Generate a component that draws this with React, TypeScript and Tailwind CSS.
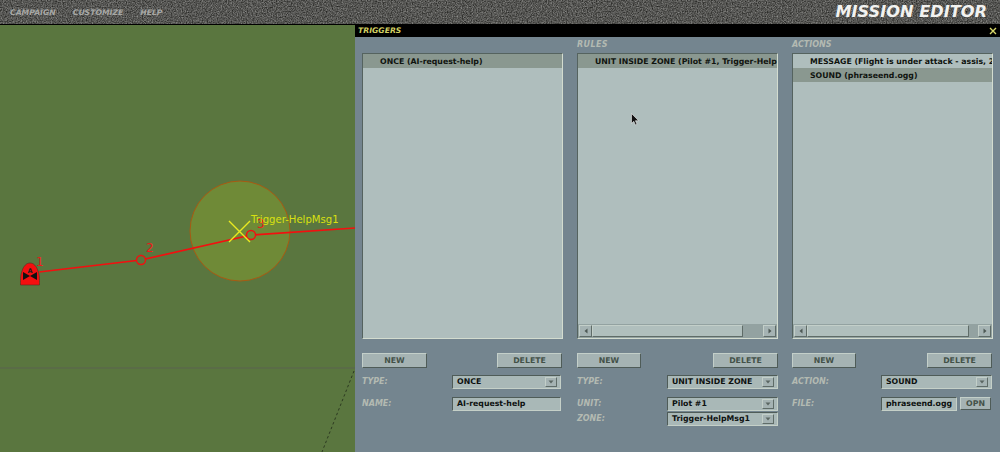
import type { ReactNode } from "react";

const dejavu = "font-['DejaVu_Sans',sans-serif]";
const labelClass = `${dejavu} text-[8px] font-bold italic leading-3 text-[#b3bab2]`;
const fieldClass = `${dejavu} flex items-center whitespace-nowrap bg-[#a9b8b7] pl-1 text-[7.8px] font-bold leading-none text-[#0d1110] border border-t-[#4f5c58] border-l-[#4f5c58] border-r-[#c5d0c8] border-b-[#c5d0c8]`;

const Button = ({ label, className }: { label: string; className: string }) => (
  <button className={`${dejavu} flex items-center justify-center bg-[#a5b3b3] text-[7.8px] font-bold leading-none text-[#435148] border border-t-[#c3cfc9] border-l-[#c3cfc9] border-r-[#4f5c58] border-b-[#4f5c58] ${className}`}>
    {label}
  </button>
);

const Select = ({ value, className }: { value: string; className: string }) => (
  <div className={`${fieldClass} justify-between pr-[3px] ${className}`}>
    <span>{value}</span>
    <span className="flex h-[10px] w-3 items-center justify-center border border-t-[#c3cfc9] border-l-[#c3cfc9] border-r-[#5f6c68] border-b-[#5f6c68] bg-[#a5b3b3]">
      <svg width="6" height="4" viewBox="0 0 6 4">
        <path d="M0.5 0.5h5L3 3.5z" fill="#5a6662" />
      </svg>
    </span>
  </div>
);

const Row = ({ label, children, className }: { label: string; children: ReactNode; className: string }) => (
  <div className={`flex items-center justify-between ${className}`}>
    <span className={labelClass}>{label}</span>
    {children}
  </div>
);

const Scrollbar = ({ thumb }: { thumb: string }) => (
  <div className="mt-auto flex h-[14px] shrink-0 items-center bg-[#93a2a1] px-px">
    <span className="flex h-3 w-[13px] items-center justify-center border border-[#c3cfc9] border-r-[#5f6c68] border-b-[#5f6c68] bg-[#a5b3b3]">
      <svg width="4" height="6" viewBox="0 0 4 6">
        <path d="M3.5 0.5v5L0.5 3z" fill="#4d5955" />
      </svg>
    </span>
    <span className={`h-3 border border-[#c3cfc9] border-r-[#5f6c68] border-b-[#5f6c68] bg-[#b0bfbd] ${thumb}`} />
    <span className="ml-auto flex h-3 w-[13px] items-center justify-center border border-[#c3cfc9] border-r-[#5f6c68] border-b-[#5f6c68] bg-[#a5b3b3]">
      <svg width="4" height="6" viewBox="0 0 4 6">
        <path d="M0.5 0.5v5L3.5 3z" fill="#4d5955" />
      </svg>
    </span>
  </div>
);

const ListBox = ({ items, selected, thumb }: { items: string[]; selected: number; thumb?: string }) => (
  <div className="flex h-[286px] flex-col overflow-hidden border border-t-[#55635f] border-l-[#55635f] border-r-[#d3dccf] border-b-[#d3dccf] bg-[#afbebd]">
    {items.map((item, i) => (
      <div
        key={item}
        className={`${dejavu} flex h-[14px] shrink-0 items-center whitespace-nowrap pl-[17px] pt-px text-[7.8px] font-bold leading-none text-[#10140f] ${i === selected ? "bg-[#8a9890]" : ""}`}
      >
        {item}
      </div>
    ))}
    {thumb && <Scrollbar thumb={thumb} />}
  </div>
);

const Cursor = () => (
  <svg className="absolute left-[631px] top-[113px]" width="9" height="13" viewBox="0 0 9 13">
    <path d="M0.5 0.5v10l2.3-2.2 1.6 3.6 1.6-.7-1.6-3.5h3.2z" fill="#111" stroke="#eee" strokeWidth="0.6" />
  </svg>
);

const MapView = () => (
  <div className="relative flex-1 overflow-hidden bg-[#5a763f]">
    <svg className="absolute inset-0" width="355" height="427" viewBox="0 25 355 427">
      <line x1="0" y1="368" x2="355" y2="368" stroke="#5a6350" strokeWidth="1.2" />
      <line x1="354" y1="371" x2="322" y2="452" stroke="#1f2a18" strokeWidth="0.8" strokeDasharray="2.5 2.5" />
      <circle cx="240" cy="231" r="50" fill="#6f8a37" stroke="#a85a12" strokeWidth="1" />
      <polyline points="39,272 141,260 251,235 355,228" fill="none" stroke="#f40f0f" strokeWidth="1.7" />
      <circle cx="141" cy="260" r="4.5" fill="#5a763f" stroke="#f40f0f" strokeWidth="1.4" />
      <circle cx="251" cy="235" r="4.5" fill="#6f8a37" stroke="#f40f0f" strokeWidth="1.4" />
      <path d="M229 221 L250 242 M250 221 L229 242" stroke="#eaea20" strokeWidth="1.4" />
      <path d="M20.5 285 C20.5 278 20.5 275 22 271 C23.5 266 26.5 263 30 263 C33.5 263 36.5 266 38 271 C39.5 275 39.5 278 39.5 285 Z" fill="#f40f0f" stroke="#5a2a20" strokeWidth="0.6" />
      <path d="M23 272 L30 276 L37 272 V280 L30 276 L23 280 Z" fill="#111" />
      <text x="30" y="273" textAnchor="middle" fontSize="6.5" fontWeight="bold" fill="#222" fontFamily="DejaVu Sans">A</text>
      <g fontFamily="DejaVu Sans" fontSize="12" fill="#f01818">
        <text x="36" y="266">1</text>
        <text x="146" y="252">2</text>
        <text x="257" y="228">3</text>
      </g>
      <text x="251" y="223" fontFamily="DejaVu Sans" fontSize="10.1" fill="#d9e010">Trigger-HelpMsg1</text>
    </svg>
  </div>
);

export default function App() {
  return (
    <div className="relative flex h-[452px] w-[1000px] flex-col overflow-hidden bg-black">
      <header className="relative flex h-6 shrink-0 items-center justify-between overflow-hidden bg-[#595957] pl-[10px] pr-[13px]">
        <svg className="absolute inset-0" width="1000" height="24">
          <filter id="grain" colorInterpolationFilters="sRGB" x="0" y="0" width="100%" height="100%">
            <feTurbulence type="fractalNoise" baseFrequency="0.8" numOctaves="2" seed="4" />
            <feColorMatrix values="0.55 0 0 0 0.06  0.55 0 0 0 0.06  0.55 0 0 0 0.05  0 0 0 0 1" />
          </filter>
          <rect width="1000" height="24" filter="url(#grain)" />
        </svg>
        <nav className={`${dejavu} relative flex gap-[17px] pt-px text-[7.7px] font-bold italic text-[#a7a8a5]`}>
          <span>CAMPAIGN</span>
          <span>CUSTOMIZE</span>
          <span>HELP</span>
        </nav>
        <h1 className={`${dejavu} relative text-[16.2px] font-bold italic leading-none text-[#f2f2f0]`}>MISSION EDITOR</h1>
      </header>

      <div className="flex flex-1 pt-px">
        <MapView />

        <section className="flex w-[645px] flex-col bg-[#74858f]">
          <div className="flex h-3 items-center justify-between bg-black pl-[3px] pr-[3px]">
            <span className={`${dejavu} text-[7.7px] font-bold italic leading-none text-[#d2cf62]`}>TRIGGERS</span>
            <svg width="8" height="8" viewBox="0 0 8 8">
              <path d="M1 1 L7 7 M7 1 L1 7" stroke="#d8d86a" strokeWidth="1.4" />
            </svg>
          </div>

          <div className="grid grid-cols-3 gap-x-[14px] px-[7px]">
            <div className="flex flex-col">
              <div className="h-4" />
              <ListBox items={["ONCE (AI-request-help)"]} selected={0} />
              <div className="mt-[14px] flex justify-between pr-px">
                <Button label="NEW" className="h-[15px] w-[65px]" />
                <Button label="DELETE" className="h-[15px] w-[65px]" />
              </div>
              <Row label="TYPE:" className="mt-[7px] pr-[2px]">
                <Select value="ONCE" className="h-[14px] w-[109px]" />
              </Row>
              <Row label="NAME:" className="mt-2 pr-[2px]">
                <div className={`${fieldClass} h-[14px] w-[109px]`}>AI-request-help</div>
              </Row>
            </div>

            <div className="flex flex-col">
              <div className={`${labelClass} h-4 pt-[2px] tracking-[0.4px]`}>RULES</div>
              <ListBox items={["UNIT INSIDE ZONE (Pilot #1, Trigger-HelpMsg1)"]} selected={0} thumb="w-[151px]" />
              <div className="mt-[14px] flex justify-between">
                <Button label="NEW" className="h-[15px] w-[64px]" />
                <Button label="DELETE" className="h-[15px] w-[65px]" />
              </div>
              <Row label="TYPE:" className="mt-[7px]">
                <Select value="UNIT INSIDE ZONE" className="h-[14px] w-[111px]" />
              </Row>
              <Row label="UNIT:" className="mt-2">
                <Select value="Pilot #1" className="h-[14px] w-[111px]" />
              </Row>
              <Row label="ZONE:" className="mt-px">
                <Select value="Trigger-HelpMsg1" className="h-[14px] w-[111px]" />
              </Row>
            </div>

            <div className="flex flex-col">
              <div className={`${labelClass} h-4 pt-[2px]`}>ACTIONS</div>
              <ListBox
                items={["MESSAGE (Flight is under attack - assis, 20 sec)", "SOUND (phraseend.ogg)"]}
                selected={1}
                thumb="w-[162px]"
              />
              <div className="mt-[14px] flex justify-between pr-px">
                <Button label="NEW" className="h-[15px] w-[64px]" />
                <Button label="DELETE" className="h-[15px] w-[65px]" />
              </div>
              <Row label="ACTION:" className="mt-[7px] pr-px">
                <Select value="SOUND" className="h-[14px] w-[111px]" />
              </Row>
              <Row label="FILE:" className="mt-2 pr-[2px]">
                <div className="flex w-[110px] justify-between">
                  <div className={`${fieldClass} h-[14px] w-[76px]`}>phraseend.ogg</div>
                  <Button label="OPN" className="h-[13px] w-[31px]" />
                </div>
              </Row>
            </div>
          </div>
        </section>
      </div>

      <Cursor />
    </div>
  );
}
